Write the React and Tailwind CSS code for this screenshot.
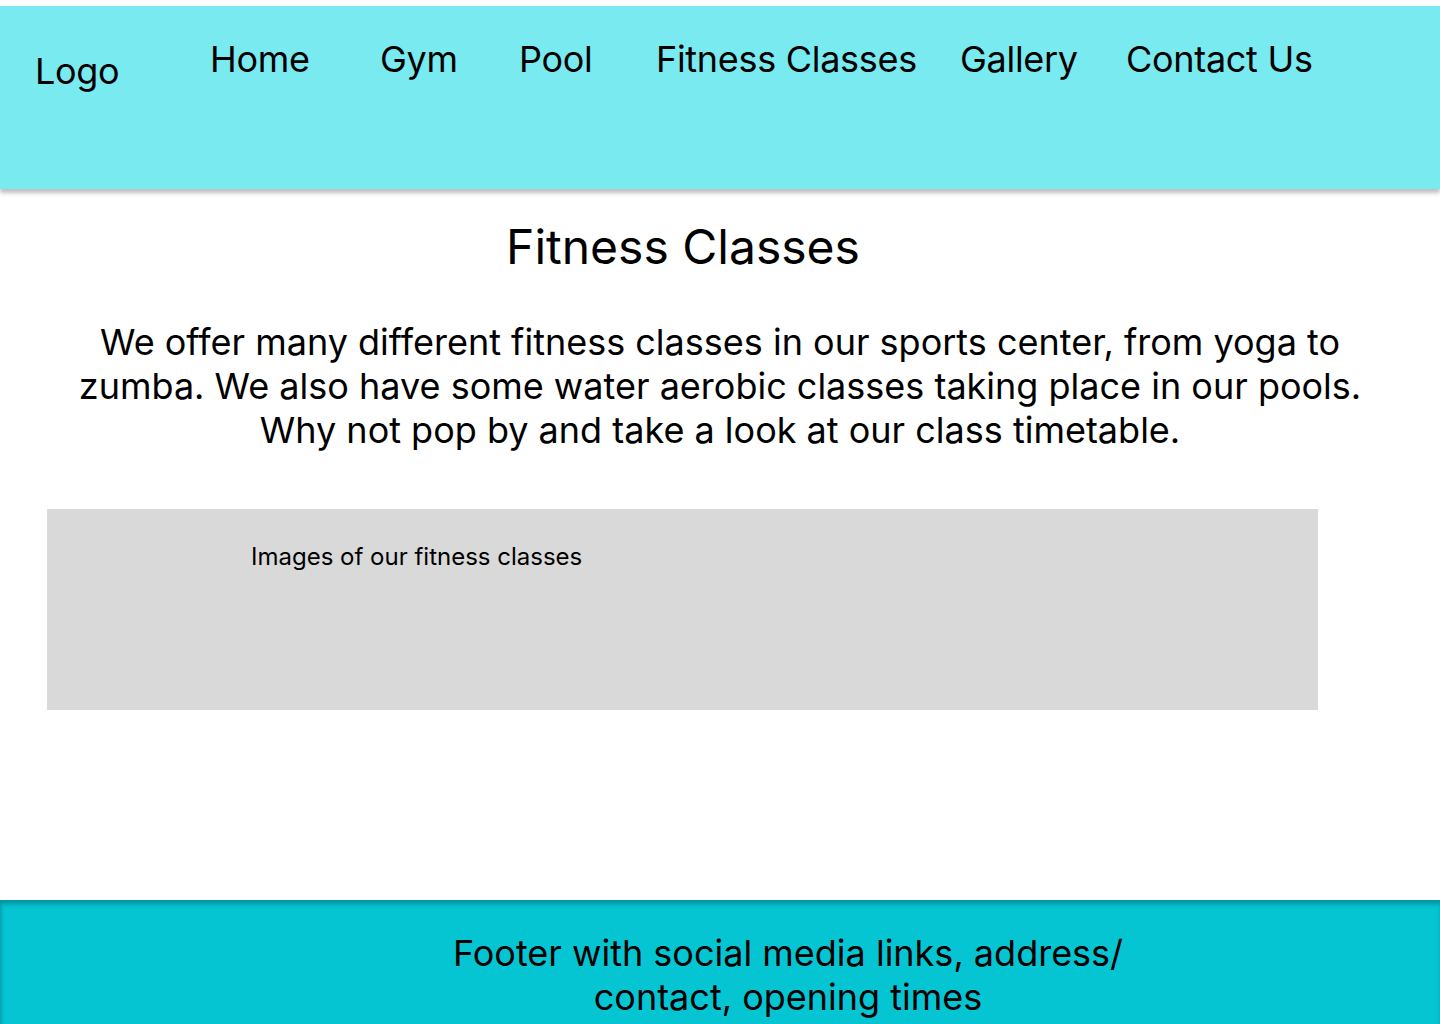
export default function App() {
  const nav = [
    { label: "Home", w: "w-[170px]" },
    { label: "Gym", w: "w-[139px]" },
    { label: "Pool", w: "w-[137px]" },
    { label: "Fitness Classes", w: "w-[304px]" },
    { label: "Gallery", w: "w-[166px]" },
    { label: "Contact Us", w: "w-[200px]" },
  ];
  return (
    <div className="w-[1440px] h-[1024px] overflow-hidden bg-white text-black font-['Inter','Noto_Sans',sans-serif] flex flex-col">
      <header className="mt-[6px] h-[183px] shrink-0 bg-[#7AEAF1] shadow-[0_4px_4px_rgba(0,0,0,0.25)] flex items-start pl-[35px] relative z-10">
        <div className="w-[175px] mt-[43px] text-[36px] leading-[44px] tracking-[-0.3px]">Logo</div>
        <nav className="flex mt-[31px]">
          {nav.map((n) => (
            <a key={n.label} href="#" className={`${n.w} text-[36px] leading-[44px] tracking-[-0.3px] whitespace-nowrap`}>
              {n.label}
            </a>
          ))}
        </nav>
      </header>

      <h1 className="mt-[29px] pr-[74px] text-center text-[48px] leading-[58px] font-normal">
        Fitness Classes
      </h1>

      <p className="mt-[44px] px-[70px] text-center text-[36px] leading-[44px]">
        We offer many different fitness classes in our sports center, from yoga to zumba. We also have some water aerobic classes taking place in our pools. Why not pop by and take a look at our class timetable.
      </p>

      <section className="mt-[57px] ml-[47px] w-[1271px] h-[201px] shrink-0 bg-[#D9D9D9] pl-[204px] pt-[34px]">
        <p className="text-[24px] leading-[28px]">Images of our fitness classes</p>
      </section>

      <footer className="mt-auto h-[124px] shrink-0 bg-[#05C5D3] shadow-[inset_1px_4px_4px_rgba(0,0,0,0.25)] pt-[31px]">
        <p className="ml-[438px] w-[700px] text-center text-[36px] leading-[44px]">
          Footer with social media links, address/ contact, opening times
        </p>
      </footer>
    </div>
  );
}
